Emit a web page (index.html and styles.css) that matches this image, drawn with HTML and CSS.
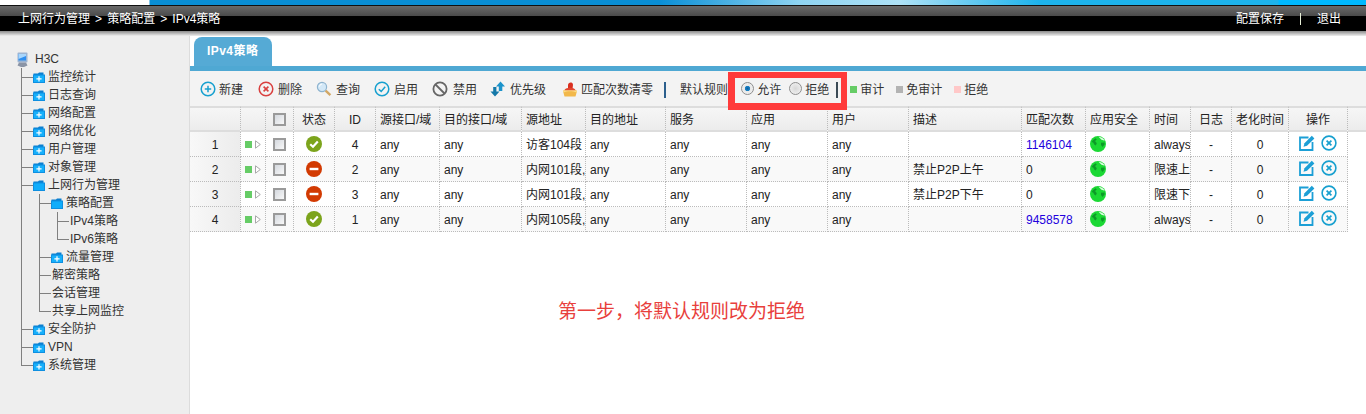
FILE: index.html
```html
<!DOCTYPE html>
<html lang="zh">
<head>
<meta charset="utf-8">
<title>IPv4策略</title>
<link rel="stylesheet" href="styles.css">
</head>
<body>
<svg class="sprite" aria-hidden="true">
  <symbol id="folder" viewBox="0 0 12 11">
    <path d="M0.5 3.5V1.5H5L6 0.5H10.5V3Z" fill="#0a7fd0"/>
    <rect x="0" y="2.5" width="12" height="8.5" fill="#0f8fe0"/>
    <rect x="1" y="3.5" width="10" height="6.5" fill="#17b0fb"/>
    <path d="M6 4.2V9.4M3.4 6.8H8.6" stroke="#fff" stroke-width="1.2" fill="none"/>
  </symbol>
  <symbol id="folder-open" viewBox="0 0 12 11">
    <path d="M0.5 3.5V1.5H5L6 0.5H10.5V3Z" fill="#0a7fd0"/>
    <rect x="0" y="2.5" width="12" height="8.5" fill="#0f8fe0"/>
    <rect x="1" y="3.5" width="10" height="6.5" fill="#10adfb"/>
  </symbol>
  <symbol id="pc" viewBox="0 0 13 15">
    <rect x="1.5" y="0.5" width="10" height="10" rx="1" fill="#9db4d2"/>
    <rect x="2.5" y="2" width="7.5" height="6.5" fill="#2f8ff0"/>
    <path d="M2.5 2H10V4L2.5 7Z" fill="#a9d6fb"/>
    <path d="M3 10.5H10L11.5 13.5 8 15H5L1.5 13.5Z" fill="#8a94a6"/>
  </symbol>
  <symbol id="add" viewBox="0 0 16 16">
    <circle cx="8" cy="8" r="6.8" fill="none" stroke="#17a0cf" stroke-width="1.5"/>
    <path d="M8 4.8V11.2M4.8 8H11.2" stroke="#17a0cf" stroke-width="1.5"/>
  </symbol>
  <symbol id="del" viewBox="0 0 16 16">
    <circle cx="8" cy="8" r="6.8" fill="none" stroke="#d9403f" stroke-width="1.5"/>
    <path d="M5.6 5.6L10.4 10.4M10.4 5.6L5.6 10.4" stroke="#d9403f" stroke-width="1.6"/>
  </symbol>
  <symbol id="search" viewBox="0 0 16 16">
    <circle cx="6" cy="6" r="4.6" fill="#d3e8f7" stroke="#8fb4cf" stroke-width="1.2"/>
    <path d="M3.4 5.6A3 3 0 0 1 6 3" stroke="#fff" stroke-width="1" fill="none"/>
    <path d="M9.6 9.6L14.4 14.2" stroke="#d2a765" stroke-width="2.4"/>
  </symbol>
  <symbol id="on" viewBox="0 0 16 16">
    <circle cx="8" cy="8" r="6.8" fill="none" stroke="#17a0cf" stroke-width="1.5"/>
    <path d="M4.8 8.2L7.2 10.4 11.2 5.8" fill="none" stroke="#17a0cf" stroke-width="1.5"/>
  </symbol>
  <symbol id="off" viewBox="0 0 16 16">
    <circle cx="8" cy="8" r="6.6" fill="none" stroke="#666" stroke-width="1.8"/>
    <path d="M3.5 3.5L12.5 12.5" stroke="#666" stroke-width="1.8"/>
  </symbol>
  <symbol id="prio" viewBox="0 0 16 16">
    <path d="M10.5 0.5L15 5.5H12.3V10H8.8V5.5H6Z" fill="#1b93cb"/>
    <path d="M5 15.5L0.5 10.5H3.2V6H6.4V10.5H9.5Z" fill="#1478a8"/>
  </symbol>
  <symbol id="broom" viewBox="0 0 16 16">
    <path d="M1 10C3 7 12 7 15 10L13.5 15.5H2.5Z" fill="#f2b84a"/>
    <path d="M1 10C3 7.6 12 7.6 15 10L14.6 11.5C11 9.8 5 9.8 1.4 11.5Z" fill="#fbdc86"/>
    <path d="M6 8.5L6 4C6 1 10.5 0.5 11 3.4L10.5 8.5Z" fill="#d92f20"/>
    <path d="M2.5 9.2C4 6 12 6 13.5 9.2Z" fill="#e2452f"/>
  </symbol>
  <symbol id="ok" viewBox="0 0 16 16">
    <circle cx="8" cy="8" r="8" fill="#7ca41c"/>
    <path d="M4.2 8.2L7 10.8 11.8 5.6" fill="none" stroke="#fff" stroke-width="2.2"/>
  </symbol>
  <symbol id="stop" viewBox="0 0 16 16">
    <circle cx="8" cy="8" r="8" fill="#d23a02"/>
    <rect x="3.6" y="6.8" width="8.8" height="2.4" fill="#fff"/>
  </symbol>
  <symbol id="globe" viewBox="0 0 16 16">
    <circle cx="8" cy="8" r="8" fill="#1bd834"/>
    <path d="M1.5 6C2.5 4.5 3.5 3.5 5.5 2.2L6.8 3.5 5 5 6.8 7.2 5.8 9.6 4.2 8.6 3.2 6.5ZM11 6.8L14.6 6.4 14.6 8.6 12.5 11 11 9Z" fill="#0d9a28"/>
    <path d="M8.5 0.8C11.5 1 13.8 2.8 14.8 4.8L11.5 3.8Z" fill="#e0fbe4"/>
  </symbol>
  <symbol id="edit" viewBox="0 0 16 16">
    <path d="M9.5 2.5H1V15H13.5V7" fill="none" stroke="#1c9fd6" stroke-width="1.8"/>
    <path d="M4.5 11.8L5.5 8.2 12.8 0.8 15.4 3.4 8 10.7Z" fill="#1c9fd6"/>
  </symbol>
  <symbol id="close" viewBox="0 0 16 16">
    <circle cx="8" cy="8" r="6.9" fill="none" stroke="#17a0cf" stroke-width="1.6"/>
    <path d="M5.6 5.6L10.4 10.4M10.4 5.6L5.6 10.4" stroke="#17a0cf" stroke-width="1.7"/>
  </symbol>
  <symbol id="tri" viewBox="0 0 6 9">
    <path d="M0.5 0.8L5.3 4.5 0.5 8.2Z" fill="#fff" stroke="#a8a8a8" stroke-width="1"/>
  </symbol>
</svg>

<div class="banner"></div>
<header class="topbar">
  <div class="crumbs">上网行为管理 &gt; 策略配置 &gt; IPv4策略</div>
  <nav class="top-actions"><span>配置保存</span><i class="top-sep"></i><span>退出</span></nav>
</header>
<div class="shade"></div>

<div class="page">
  <aside class="sidebar">
    <div class="root"><svg class="pc-icon"><use href="#pc"/></svg><span>H3C</span></div>
    <ul class="tree">
      <li><div class="node"><svg class="fld"><use href="#folder"/></svg>监控统计</div></li>
      <li><div class="node"><svg class="fld"><use href="#folder"/></svg>日志查询</div></li>
      <li><div class="node"><svg class="fld"><use href="#folder"/></svg>网络配置</div></li>
      <li><div class="node"><svg class="fld"><use href="#folder"/></svg>网络优化</div></li>
      <li><div class="node"><svg class="fld"><use href="#folder"/></svg>用户管理</div></li>
      <li><div class="node"><svg class="fld"><use href="#folder"/></svg>对象管理</div></li>
      <li><div class="node"><svg class="fld"><use href="#folder-open"/></svg>上网行为管理</div>
        <ul class="sub">
          <li><div class="node"><svg class="fld"><use href="#folder-open"/></svg>策略配置</div>
            <ul class="sub">
              <li><div class="node leaf">IPv4策略</div></li>
              <li><div class="node leaf">IPv6策略</div></li>
            </ul>
          </li>
          <li><div class="node"><svg class="fld"><use href="#folder"/></svg>流量管理</div></li>
          <li><div class="node leaf">解密策略</div></li>
          <li><div class="node leaf">会话管理</div></li>
          <li><div class="node leaf">共享上网监控</div></li>
        </ul>
      </li>
      <li><div class="node"><svg class="fld"><use href="#folder"/></svg>安全防护</div></li>
      <li><div class="node"><svg class="fld"><use href="#folder"/></svg>VPN</div></li>
      <li><div class="node"><svg class="fld"><use href="#folder"/></svg>系统管理</div></li>
    </ul>
  </aside>

  <main class="main">
    <div class="tabs"><div class="tab">IPv4策略</div></div>
    <div class="toolbar">
      <span class="tool t-new"><svg class="ti"><use href="#add"/></svg>新建</span>
      <span class="tool t-del"><svg class="ti"><use href="#del"/></svg>删除</span>
      <span class="tool t-q"><svg class="ti"><use href="#search"/></svg>查询</span>
      <span class="tool t-on"><svg class="ti"><use href="#on"/></svg>启用</span>
      <span class="tool t-off"><svg class="ti"><use href="#off"/></svg>禁用</span>
      <span class="tool t-pr"><svg class="ti"><use href="#prio"/></svg>优先级</span>
      <span class="tool t-cl"><svg class="ti"><use href="#broom"/></svg>匹配次数清零</span>
      <i class="tb-sep"></i>
      <span class="tb-label">默认规则</span>
      <span class="radio-item first"><i class="radio checked"></i>允许</span>
      <span class="radio-item"><i class="radio"></i>拒绝</span>
      <i class="tb-sep dark"></i>
      <span class="legend"><i class="sq green"></i>审计</span>
      <span class="legend"><i class="sq gray"></i>免审计</span>
      <span class="legend"><i class="sq pink"></i>拒绝</span>
    </div>

    <table class="grid">
      <colgroup>
        <col class="c51"><col class="c25"><col class="c28"><col class="c41"><col class="c41">
        <col class="c64"><col class="c82"><col class="c64"><col class="c80"><col class="c81">
        <col class="c81"><col class="c81"><col class="c113"><col class="c64"><col class="c64">
        <col class="c41"><col class="c41"><col class="c57"><col class="c59"><col class="c18">
      </colgroup>
      <thead>
        <tr>
          <th></th><th></th><th class="mid"><i class="cb"></i></th><th class="mid">状态</th><th class="mid">ID</th>
          <th>源接口/域</th><th>目的接口/域</th><th>源地址</th><th>目的地址</th><th>服务</th>
          <th>应用</th><th>用户</th><th>描述</th><th>匹配次数</th><th>应用安全</th>
          <th>时间</th><th class="mid">日志</th><th class="mid">老化时间</th><th class="mid">操作</th><th class="fill"></th>
        </tr>
      </thead>
      <tbody>
        <tr>
          <td class="mid idx">1</td><td class="mid"><i class="mark"></i><svg class="tri"><use href="#tri"/></svg></td><td class="mid"><i class="cb"></i></td>
          <td class="mid"><svg class="si"><use href="#ok"/></svg></td><td class="mid">4</td>
          <td>any</td><td>any</td><td>访客104段</td><td>any</td><td>any</td><td>any</td><td>any</td><td></td>
          <td class="hits">1146104</td><td><svg class="si"><use href="#globe"/></svg></td><td>always</td>
          <td class="mid">-</td><td class="mid">0</td>
          <td class="mid"><svg class="op"><use href="#edit"/></svg><svg class="op"><use href="#close"/></svg></td><td class="fill"></td>
        </tr>
        <tr>
          <td class="mid idx">2</td><td class="mid"><i class="mark"></i><svg class="tri"><use href="#tri"/></svg></td><td class="mid"><i class="cb"></i></td>
          <td class="mid"><svg class="si"><use href="#stop"/></svg></td><td class="mid">2</td>
          <td>any</td><td>any</td><td>内网101段,</td><td>any</td><td>any</td><td>any</td><td>any</td><td>禁止P2P上午</td>
          <td>0</td><td><svg class="si"><use href="#globe"/></svg></td><td>限速上</td>
          <td class="mid">-</td><td class="mid">0</td>
          <td class="mid"><svg class="op"><use href="#edit"/></svg><svg class="op"><use href="#close"/></svg></td><td class="fill"></td>
        </tr>
        <tr>
          <td class="mid idx">3</td><td class="mid"><i class="mark"></i><svg class="tri"><use href="#tri"/></svg></td><td class="mid"><i class="cb"></i></td>
          <td class="mid"><svg class="si"><use href="#stop"/></svg></td><td class="mid">3</td>
          <td>any</td><td>any</td><td>内网101段,</td><td>any</td><td>any</td><td>any</td><td>any</td><td>禁止P2P下午</td>
          <td>0</td><td><svg class="si"><use href="#globe"/></svg></td><td>限速下</td>
          <td class="mid">-</td><td class="mid">0</td>
          <td class="mid"><svg class="op"><use href="#edit"/></svg><svg class="op"><use href="#close"/></svg></td><td class="fill"></td>
        </tr>
        <tr>
          <td class="mid idx">4</td><td class="mid"><i class="mark"></i><svg class="tri"><use href="#tri"/></svg></td><td class="mid"><i class="cb"></i></td>
          <td class="mid"><svg class="si"><use href="#ok"/></svg></td><td class="mid">1</td>
          <td>any</td><td>any</td><td>内网105段,</td><td>any</td><td>any</td><td>any</td><td>any</td><td></td>
          <td class="hits">9458578</td><td><svg class="si"><use href="#globe"/></svg></td><td>always</td>
          <td class="mid">-</td><td class="mid">0</td>
          <td class="mid"><svg class="op"><use href="#edit"/></svg><svg class="op"><use href="#close"/></svg></td><td class="fill"></td>
        </tr>
      </tbody>
    </table>
  </main>
</div>

<div class="red-box"></div>
<div class="note">第一步，将默认规则改为拒绝</div>
</body>
</html>
```

FILE: styles.css
```css
* { box-sizing: border-box; }
html, body { margin: 0; padding: 0; }
body {
  width: 1366px;
  height: 414px;
  overflow: hidden;
  background: #fff;
  position: relative;
  display: flex;
  flex-direction: column;
  font: 12px/18px "Liberation Sans", "Noto Sans CJK SC", sans-serif;
  color: #333;
}
i { font-style: normal; display: inline-block; }
.sprite { position: absolute; width: 0; height: 0; }

.banner {
  height: 5px;
  flex: none;
  background: linear-gradient(90deg, #fff 0, #fff 149px, #0a8fd6 150px, #0a8fd6 660px, #8fd4f2 800px, #aee2f7 900px, #1db3ec 1040px, #1db3ec 1278px, #00b9ff 1279px);
}
.topbar {
  height: 26px;
  flex: none;
  border-top: 1px solid #111;
  background: linear-gradient(180deg, #6a6a6a 0, #4a4a4a 10px, #000 10px, #000 100%);
  color: #fff;
  display: flex;
  justify-content: space-between;
  align-items: center;
  padding: 0 25px 0 18px;
}
.crumbs { word-spacing: 1.75px; }
.top-actions { display: flex; align-items: center; }
.top-sep { width: 1px; height: 12px; background: #e8f0d8; margin: 0 16px; }
.shade {
  height: 5px;
  flex: none;
  background: linear-gradient(180deg, #8a8a8a, #eee);
}

.page { flex: 1; display: flex; min-height: 0; }

.sidebar {
  width: 190px;
  flex: none;
  background: #eee;
  border-right: 1px solid #dcdcdc;
  padding-top: 14px;
  overflow: hidden;
}
.root { display: flex; align-items: center; height: 18px; padding-left: 16px; }
.pc-icon { width: 13px; height: 15px; margin-right: 6px; flex: none; }
.tree { margin: 0 0 0 21px; padding: 0; list-style: none; }
.sub { margin: 0 0 0 6px; padding: 0; list-style: none; }
.tree li, .sub li { position: relative; padding-left: 12px; }
.tree li::before, .sub li::before {
  content: "";
  position: absolute;
  left: 0;
  top: 9px;
  width: 12px;
  border-top: 1px solid #808080;
}
.tree li::after, .sub li::after {
  content: "";
  position: absolute;
  left: 0;
  top: 0;
  bottom: 0;
  border-left: 1px solid #808080;
}
.tree li:last-child::after, .sub li:last-child::after { bottom: auto; height: 10px; }
.node { height: 18px; display: flex; align-items: center; white-space: nowrap; }
.fld { width: 12px; height: 11px; margin-right: 3px; flex: none; }
.leaf { padding-left: 1px; }

.main { flex: 1; min-width: 0; display: flex; flex-direction: column; }
.tabs { height: 35px; flex: none; padding: 1px 0 0 4px; border-bottom: 5px solid #4fa8d3; }
.tab {
  width: 78px;
  height: 29px;
  background: #55aad5;
  border-radius: 8px 8px 0 0;
  color: #fff;
  font-weight: bold;
  line-height: 29px;
  padding-left: 13px;
  letter-spacing: 0.45px;
}
.toolbar {
  height: 35px;
  flex: none;
  background: #f3f3f3;
  display: flex;
  align-items: center;
  padding: 2px 0 0 10px;
  white-space: nowrap;
}
.tool { display: flex; align-items: center; margin-right: 14px; }
.ti { width: 16px; height: 16px; margin-right: 4px; flex: none; position: relative; top: -1px; }
.t-new { margin-right: 15px; }
.t-new .ti { margin-right: 3px; }
.t-off { margin-right: 13px; }
.t-off .ti { margin-right: 5px; }
.t-pr { margin-right: 16px; }
.t-pr .ti { margin-right: 4px; }
.t-cl { margin-right: 11px; }
.t-cl .ti { margin-right: 3px; }
.tb-sep { width: 2px; height: 16px; background: #2c5f8d; margin-right: 14px; }
.tb-sep.dark { background: #3b4a55; margin: 0 12px 0 7px; }
.tb-label { margin-right: 13px; }
.radio-item { display: flex; align-items: center; }
.radio-item.first { margin-right: 8px; }
.radio {
  width: 13px;
  height: 13px;
  border-radius: 50%;
  margin-right: 3px;
  border: 1px solid #8e8e8e;
  background: radial-gradient(circle at 50% 50%, #d8d8d8, #f4f4f4);
  position: relative;
  top: -1px;
}
.radio.checked { background: radial-gradient(circle, #0d5fa0 0, #1c86c8 32%, #e8e8e8 38%, #f4f4f4 100%); }
.legend { display: flex; align-items: center; margin-right: 12px; }
.sq { width: 7px; height: 7px; margin-right: 3px; }
.green { background: #66cc66; }
.gray { background: #b3b3b3; }
.pink { background: #ffc8c8; }

.grid {
  width: 1176px;
  table-layout: fixed;
  border-collapse: separate;
  border-spacing: 0;
}
.c51 { width: 51px; } .c25 { width: 25px; } .c28 { width: 28px; } .c41 { width: 41px; }
.c64 { width: 64px; } .c82 { width: 82px; } .c80 { width: 80px; } .c81 { width: 81px; }
.c113 { width: 113px; } .c57 { width: 57px; } .c59 { width: 59px; } .c18 { width: 18px; }
.grid th, .grid td {
  padding: 1px 0 0 4px;
  text-align: left;
  font-weight: normal;
  white-space: nowrap;
  overflow: hidden;
  border-right: 1px dotted #bbb;
  vertical-align: middle;
}
.grid th {
  height: 26px;
  color: #222;
  background: linear-gradient(180deg, #f6f6f6, #ececec);
  border-top: 2px solid #ddd;
  border-bottom: 2px solid #ddd;
}
.grid td {
  height: 25px;
  color: #222;
  border-bottom: 1px dotted #bbb;
  background: #fff;
}
.grid tbody tr:nth-child(even) td { background: #f9f9f9; }
.grid .mid { text-align: center; padding: 1px 0 0; }
.grid tbody .idx { background: linear-gradient(90deg, #f8f8f8, #ececec); }
.grid tbody tr:nth-child(even) .idx { background: linear-gradient(90deg, #f8f8f8, #ececec); }
.grid th.fill { border-right: 0; }
.grid tbody .fill, .grid tbody tr:nth-child(even) .fill { border: 0; background: #fff; }
.hits { color: #2200dd !important; }
.mark { width: 7px; height: 7px; background: #66cc66; margin: -1px 3px 1px 0; vertical-align: middle; }
.tri { width: 6px; height: 9px; margin: -1px 0 1px; vertical-align: middle; }
.cb {
  width: 13px;
  height: 13px;
  border: 2px solid #9a9a9a;
  background: linear-gradient(135deg, #d4d8de, #f8f8f8);
  margin: -1px 0 1px;
  vertical-align: middle;
}
.si { width: 16px; height: 16px; margin: -1px 0 1px; vertical-align: middle; display: inline-block; }
.op { width: 16px; height: 16px; vertical-align: middle; margin: -2px 0 2px; }
.op + .op { margin-left: 6px; }

.red-box {
  position: absolute;
  left: 728px;
  top: 72px;
  width: 119px;
  height: 38px;
  border: solid #ff3b3b;
  border-width: 6px 6px 7px 7px;
}
.note {
  position: absolute;
  left: 558px;
  top: 300px;
  font-size: 19px;
  line-height: 24px;
  color: #e8403c;
  white-space: nowrap;
}
```
